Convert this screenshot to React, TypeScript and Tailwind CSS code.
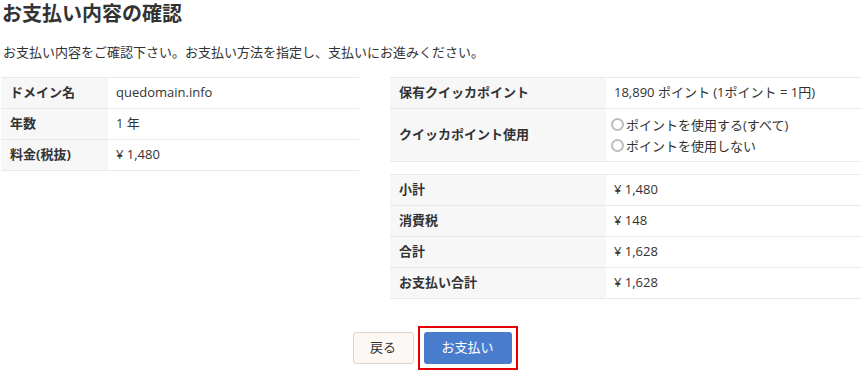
import { useState } from "react";

const font = { fontFamily: '"Open Sans", "Noto Sans CJK JP", sans-serif' };

function Row({ label, children, labelW, h = "h-[31px]" }: { label: string; children: React.ReactNode; labelW: string; h?: string }) {
  return (
    <div className={`flex border-b border-[#e9e9e9] ${h}`}>
      <div className={`${labelW} shrink-0 bg-[#f7f7f7] flex items-center pl-[9px] font-bold`}>{label}</div>
      <div className="flex-1 flex items-center pl-[8px]">{children}</div>
    </div>
  );
}

export default function App() {
  const [usePoint, setUsePoint] = useState<string>("");

  return (
    <div className="w-[868px] h-[370px] bg-white text-[13px] text-[#333] pl-px overflow-hidden" style={font}>
      <h1 className="text-[20px] font-bold leading-none pt-[4px] pl-px">お支払い内容の確認</h1>
      <p className="mt-[22px] pl-[2px] leading-none">お支払い内容をご確認下さい。お支払い方法を指定し、支払いにお進みください。</p>

      <div className="flex mt-[18px]">
        <div className="w-[358px] border-t border-[#e9e9e9] self-start">
          <Row label="ドメイン名" labelW="w-[107px]">quedomain.info</Row>
          <Row label="年数" labelW="w-[107px]">1 年</Row>
          <Row label="料金(税抜)" labelW="w-[107px]">¥ 1,480</Row>
        </div>

        <div className="ml-[31px] w-[471px]">
          <div className="border-t border-[#e9e9e9]">
            <Row label="保有クイッカポイント" labelW="w-[216px]">18,890 ポイント (1ポイント = 1円)</Row>
            <Row label="クイッカポイント使用" labelW="w-[216px]" h="h-[53px]">
              <div className="flex flex-col gap-[7px] -ml-[3px]">
                {["ポイントを使用する(すべて)", "ポイントを使用しない"].map((t) => (
                  <label key={t} className="flex items-center leading-[14px] cursor-pointer" onClick={() => setUsePoint(t)}>
                    <span className="w-[13px] h-[13px] rounded-full border-2 border-[#bdbdbd] mr-[2px] flex items-center justify-center">
                      {usePoint === t && <span className="w-[5px] h-[5px] rounded-full bg-[#4a7bd0]" />}
                    </span>
                    {t}
                  </label>
                ))}
              </div>
            </Row>
          </div>

          <div className="border-t border-[#e9e9e9] mt-[12px]">
            <Row label="小計" labelW="w-[216px]">¥ 1,480</Row>
            <Row label="消費税" labelW="w-[216px]">¥ 148</Row>
            <Row label="合計" labelW="w-[216px]">¥ 1,628</Row>
            <Row label="お支払い合計" labelW="w-[216px]">¥ 1,628</Row>
          </div>
        </div>
      </div>

      <div className="flex justify-center items-center mt-[27px] pl-[1px]">
        <button className="w-[61px] h-[32px] border border-[#d5d5d5] rounded-[3px] bg-[#fdf8f4] text-[13px] text-[#333] mr-[4px]">戻る</button>
        <div className="border-2 border-[#e60000] p-[4px]">
          <button className="w-[88px] h-[32px] rounded-[3px] bg-[#4a7cce] text-white text-[13px] block">お支払い</button>
        </div>
      </div>
    </div>
  );
}
